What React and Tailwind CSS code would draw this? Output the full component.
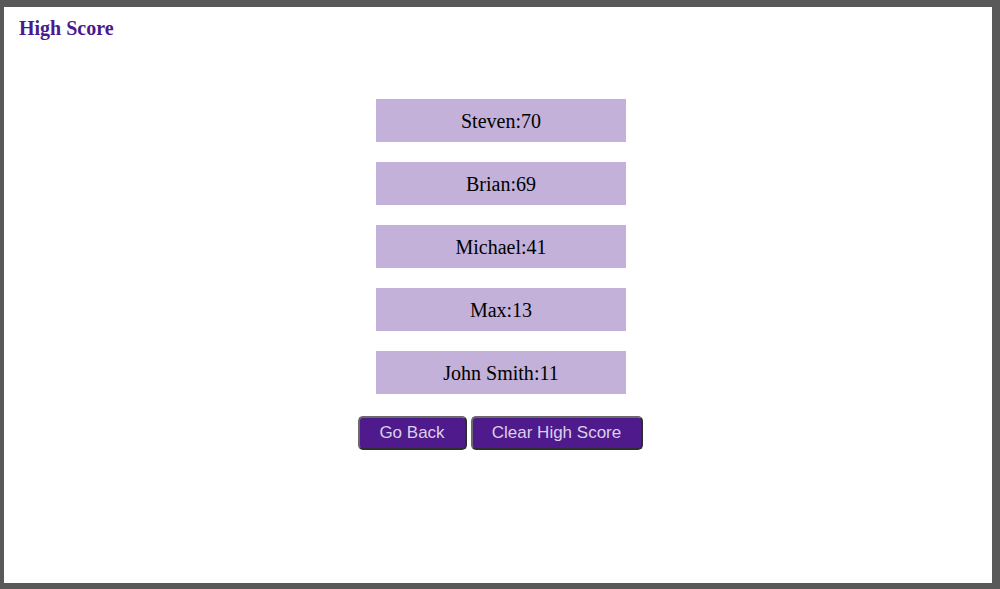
import React from "react";

const scores = [
  ["Steven", 70],
  ["Brian", 69],
  ["Michael", 41],
  ["Max", 13],
  ["John Smith", 11],
];

export default function App() {
  return (
    <div className="h-[589px] w-[1000px] bg-[#595959] pt-[7px] pl-[4px] pr-[8px] pb-[6px]">
      <div className="h-full w-full bg-white" style={{ fontFamily: '"Liberation Serif", serif' }}>
        <h1 className="pt-[10px] pl-[15px] text-[20px] font-bold leading-[23px] text-[#4a1a8c]">
          High Score
        </h1>
        <div className="mt-[59px] flex flex-col items-center pl-[6px]">
          {scores.map(([n, s]) => (
            <div
              key={n}
              className="mb-[20px] flex h-[43px] w-[250px] items-center justify-center bg-[#c3b1d9] text-[20px] text-black"
            >
              {n}:{s}
            </div>
          ))}
          <div className="mt-[2px] flex gap-[4px] pr-[2px]" style={{ fontFamily: '"Liberation Sans", Arial, sans-serif' }}>
            <button className="h-[34px] w-[109px] rounded-[5px] border-2 border-[#6a6a6a] border-r-[#2e2e2e] border-b-[#2e2e2e] bg-[#4e1a8c] text-[17px] text-[#dcd0ea]">
              Go Back
            </button>
            <button className="h-[34px] w-[172px] rounded-[5px] border-2 border-[#6a6a6a] border-r-[#2e2e2e] border-b-[#2e2e2e] bg-[#4e1a8c] text-[17px] text-[#dcd0ea]">
              Clear High Score
            </button>
          </div>
        </div>
      </div>
    </div>
  );
}
